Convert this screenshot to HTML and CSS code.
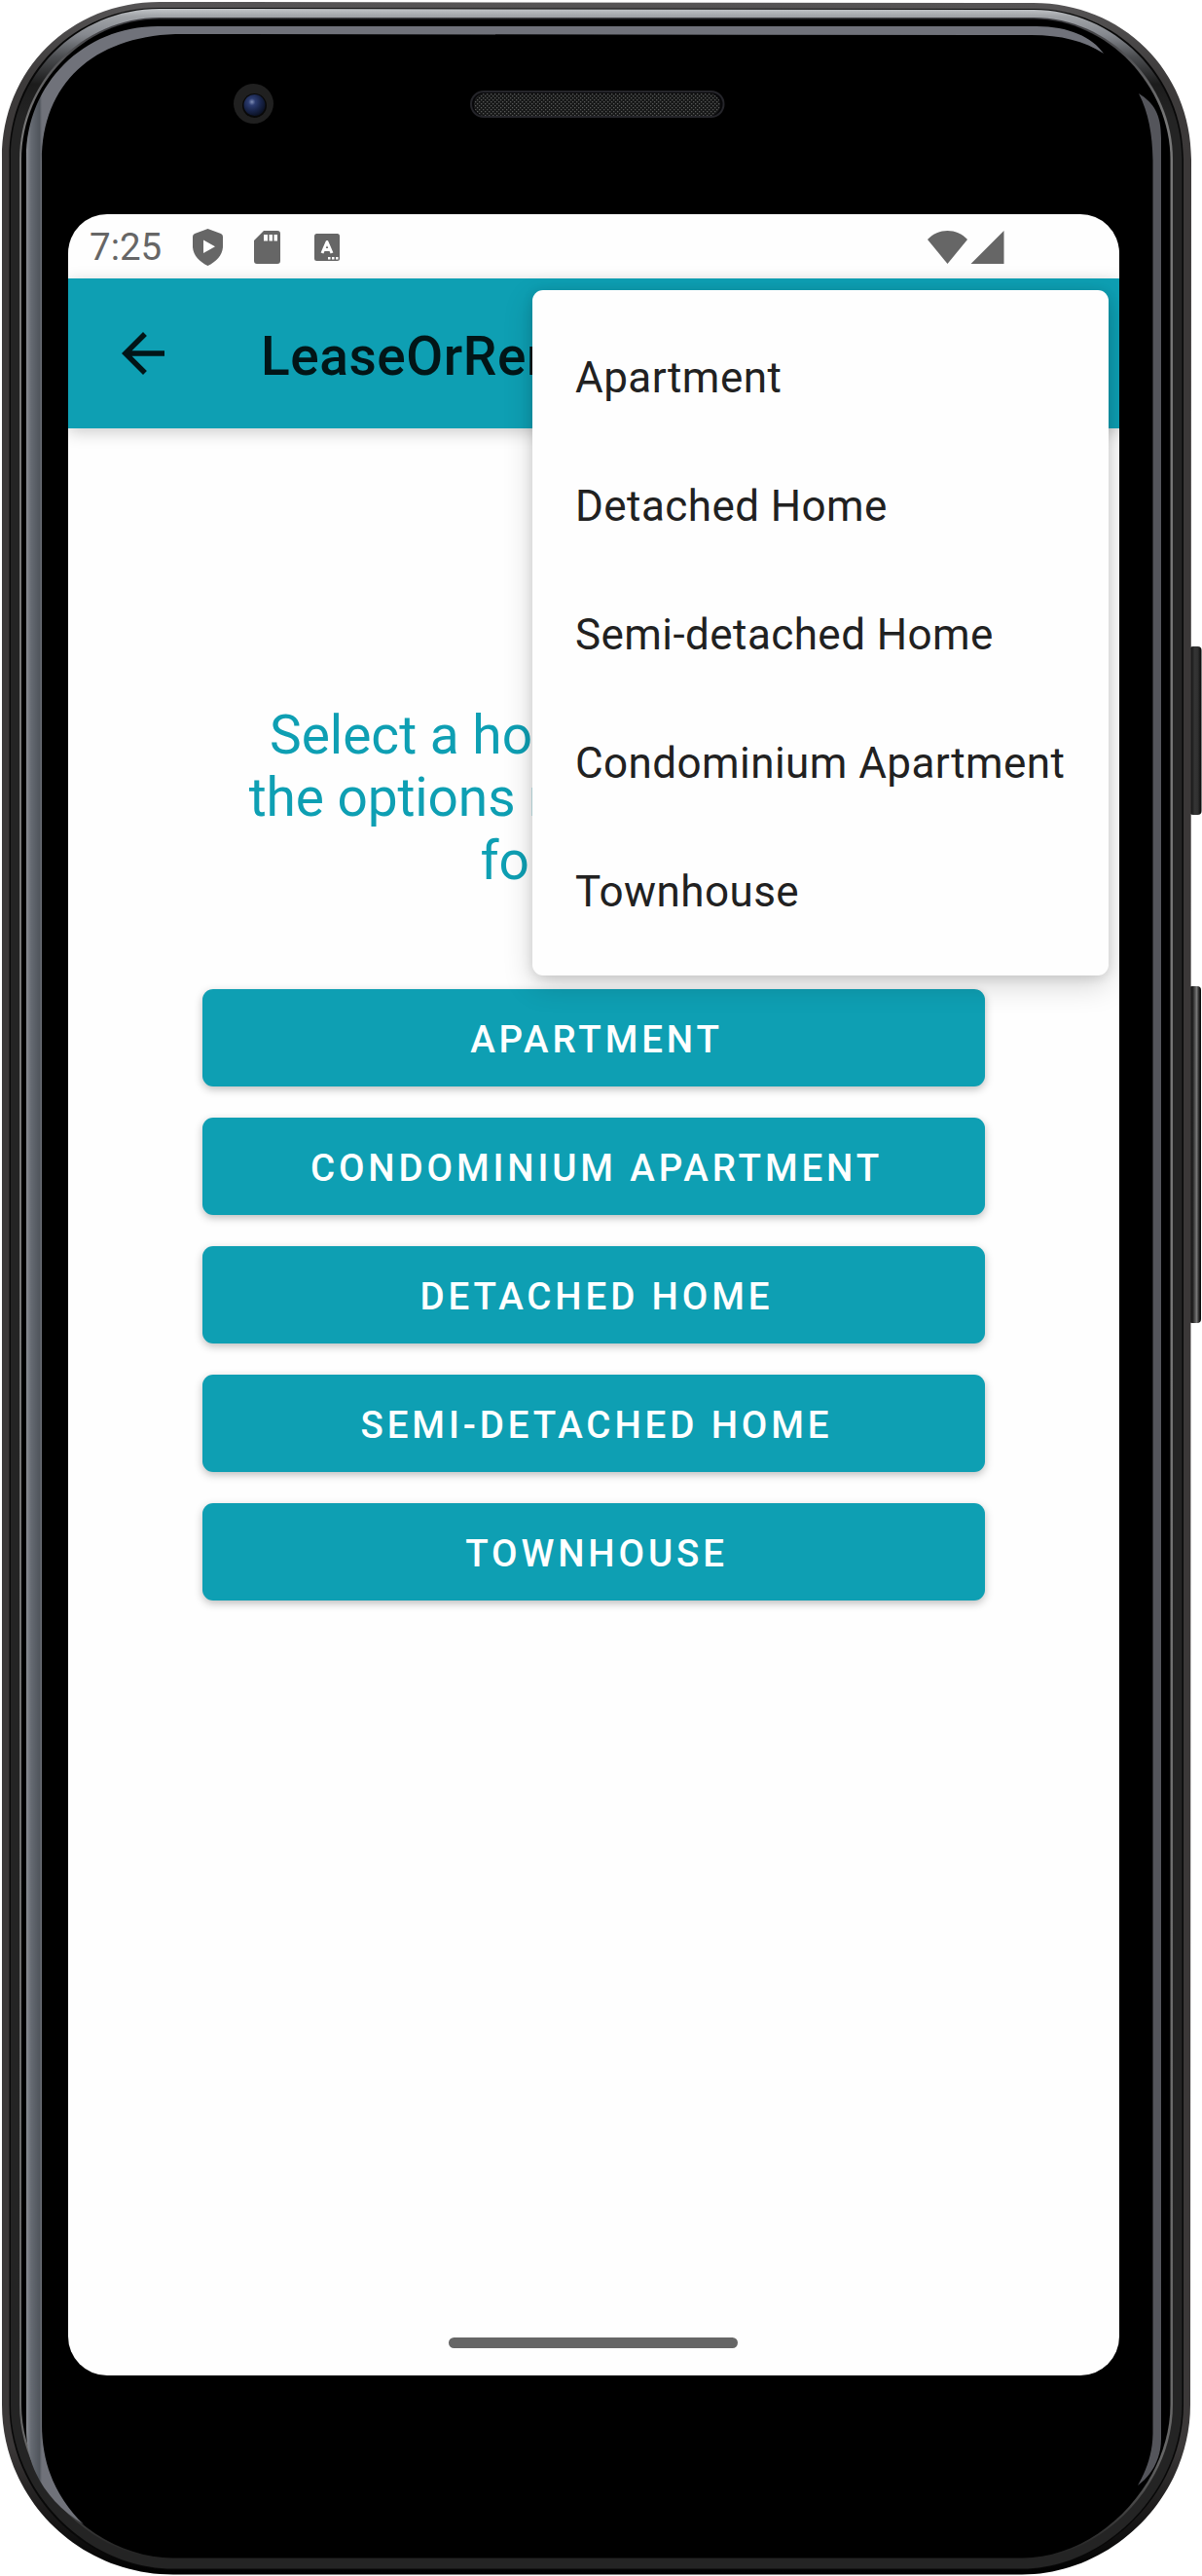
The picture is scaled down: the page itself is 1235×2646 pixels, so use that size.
FILE: index.html
```html
<!DOCTYPE html>
<html lang="en">
<head>
<meta charset="utf-8">
<title>LeaseOrRent</title>
<link rel="stylesheet" href="styles.css">
</head>
<body>
<div class="phone">
  <svg class="frame" viewBox="0 0 1235 2646" aria-hidden="true">
    <defs>
      <linearGradient id="rim" gradientUnits="userSpaceOnUse" x1="0" y1="2" x2="0" y2="2645">
        <stop offset="0" stop-color="#565455"/><stop offset=".03" stop-color="#3d3b3b"/><stop offset=".06" stop-color="#3b3838"/><stop offset=".95" stop-color="#3b3838"/><stop offset=".98" stop-color="#161515"/><stop offset="1" stop-color="#000"/>
      </linearGradient>
      <linearGradient id="metal" gradientUnits="userSpaceOnUse" x1="0" y1="8" x2="0" y2="120">
        <stop offset="0" stop-color="#c6c9cc"/><stop offset=".08" stop-color="#a0a3a7"/><stop offset=".25" stop-color="#85888e"/><stop offset=".45" stop-color="#4b4d50"/><stop offset=".7" stop-color="#1c1c1c"/><stop offset="1" stop-color="#242424"/>
      </linearGradient>
      <linearGradient id="hair" gradientUnits="userSpaceOnUse" x1="0" y1="18" x2="0" y2="2628">
        <stop offset="0" stop-color="#3c3c40"/><stop offset=".04" stop-color="#777"/><stop offset=".5" stop-color="#777"/><stop offset=".96" stop-color="#666"/><stop offset="1" stop-color="#222"/>
      </linearGradient>
      <linearGradient id="glass" gradientUnits="userSpaceOnUse" x1="27" y1="0" x2="43" y2="0">
        <stop offset="0" stop-color="#8a8d93"/><stop offset=".3" stop-color="#666b73"/><stop offset=".85" stop-color="#50555c"/><stop offset="1" stop-color="#70727a"/>
      </linearGradient>
      <linearGradient id="keys" x1="0" y1="0" x2="1" y2="0">
        <stop offset="0" stop-color="#080808"/><stop offset=".45" stop-color="#353535"/><stop offset=".7" stop-color="#303030"/><stop offset="1" stop-color="#050505"/>
      </linearGradient>
      <linearGradient id="volume" x1="0" y1="0" x2="1" y2="0">
        <stop offset="0" stop-color="#080808"/><stop offset=".35" stop-color="#222"/><stop offset=".65" stop-color="#777"/><stop offset=".85" stop-color="#222"/><stop offset="1" stop-color="#050505"/>
      </linearGradient>
      <radialGradient id="lens" cx=".38" cy=".35" r=".65">
        <stop offset="0" stop-color="#7f8db5"/><stop offset=".25" stop-color="#2c3c70"/><stop offset=".65" stop-color="#182449"/><stop offset="1" stop-color="#0c1327"/>
      </radialGradient>
      <pattern id="mesh" width="4" height="4" patternUnits="userSpaceOnUse">
        <rect width="4" height="4" fill="#161717"/><rect width="1.3" height="1.3" fill="#585958"/><rect x="2" y="2" width="1.3" height="1.3" fill="#585958"/>
      </pattern>
    </defs>
    <rect x="1222" y="664" width="12.500" height="173" rx="4" fill="url(#keys)"/>
    <rect x="1221" y="1013" width="13" height="346" rx="4" fill="url(#volume)"/>
    <path fill="url(#rim)" d="M2 162C2 72 72 2 164 2L1062 3C1152 3 1224 72 1224 164L1223 2470C1223 2566 1142 2644.500 1050 2644.500L178 2644.500C80 2644.500 2 2566 2 2470Z"/>
    <path fill="#080808" d="M9.500 162C9.500 76 76 8 164 8L1062 9C1146 9 1216 78 1216 164V2470C1216 2560 1136 2639.500 1050 2639.500H178C86 2639.500 9.500 2560 9.500 2470Z"/>
    <path fill="url(#metal)" d="M11 162C11 78 78 9 164 9L1062 10C1144 10 1214.500 80 1214.500 164V2470C1214.500 2558 1136 2638.500 1050 2638.500H178C88 2638.500 11 2558 11 2470Z"/>
    <path fill="url(#hair)" d="M20 164C20 85 84 18 164 18H1062C1140 18 1205 86 1205 164V2470C1205 2552 1132 2628.500 1050 2628.500H178C94 2628.500 20 2552 20 2470Z"/>
    <path fill="#000" d="M22 164C22 87 86 19.500 164 19.500H1062C1138 19.500 1202.500 88 1202.500 164V2470C1202.500 2550 1130 2627.500 1050 2627.500H178C96 2627.500 22 2550 22 2470Z"/>
    <path fill="url(#glass)" d="M86 2593C48 2570 27 2535 27 2495V162C27 86 86 27 162 27H1065C1098 27 1122 38 1134 55C1114 42 1090 36 1060 36L180 35C96 38 43 86 43 165V2490C43 2535 60 2568 86 2593Z"/>
    <path fill="#54555b" d="M1170 96C1186 106 1193 118 1193 142V2505C1193 2525 1184 2542 1169 2553C1178 2537 1184 2521 1184.500 2500V165C1184 137 1180 116 1170 96Z"/>
    <circle cx="260.500" cy="106.500" r="20.500" fill="#202020"/>
    <circle cx="261.500" cy="108.500" r="12.500" fill="#080808"/>
    <circle cx="261.500" cy="108" r="11" fill="url(#lens)"/>
    <rect x="484" y="94" width="259.500" height="26" rx="13" fill="#08080a" stroke="#25252a" stroke-width="2"/>
    <rect x="487" y="96" width="253" height="23" rx="11.500" fill="url(#mesh)"/>
  </svg>

  <main class="screen">
    <header class="status">
      <span class="clock">7:25</span>
      <svg class="shield" viewBox="0 0 31 38"><path fill="#666" fill-rule="evenodd" d="M15.500 0L29 5Q31 6 31 8V18C31 27 24 34 15.500 38C7 34 0 27 0 18V8Q0 6 2 5ZM11 11.500V25L23 18.300Z"/></svg>
      <svg class="card" viewBox="0 0 27 34"><path fill="#666" fill-rule="evenodd" d="M10 0H24Q27 0 27 3V31Q27 34 24 34H3Q0 34 0 31V10ZM10 4V10.500H14V4ZM15.500 4V10.500H19V4ZM20.500 4V10.500H24V4Z"/></svg>
      <svg class="letter" viewBox="0 0 26 28"><rect width="26" height="28" rx="2.500" fill="#666"/><path d="M8 20L13 8.500L18 20M10 16.500H16" fill="none" stroke="#fff" stroke-width="3" stroke-linejoin="round"/><path d="M14 24h2.500v2.500H14zM18 24h2.500v2.500H18zM22 24h2.500v2.500H22z" fill="#fff"/></svg>
      <svg class="wifi" viewBox="0 0 41 34"><path fill="#666" d="M0 9C11-3 30-3 41 9L20.500 34Z"/></svg>
      <svg class="signal" viewBox="0 0 34 34"><path fill="#666" d="M34 0V34H0Z"/></svg>
    </header>
    <div class="appbar">
      <svg class="back" viewBox="0 0 24 24"><path fill="#021517" d="M20 11H7.830l5.590-5.590L12 4l-8 8 8 8 1.410-1.410L7.830 13H20v-2z"/></svg>
      <h1 class="title">LeaseOrRent</h1>
    </div>
    <section class="content">
      <p class="prompt">
        <span class="line first">Select a ho</span>
        <span class="line second">the options n</span>
        <span class="line third">fo</span>
      </p>
      <div class="choices">
        <button class="choice">APARTMENT</button>
        <button class="choice">CONDOMINIUM APARTMENT</button>
        <button class="choice">DETACHED HOME</button>
        <button class="choice">SEMI-DETACHED HOME</button>
        <button class="choice">TOWNHOUSE</button>
      </div>
    </section>
    <div class="navhandle"></div>
    <ul class="menu">
      <li class="item">Apartment</li>
      <li class="item">Detached Home</li>
      <li class="item">Semi-detached Home</li>
      <li class="item">Condominium Apartment</li>
      <li class="item">Townhouse</li>
    </ul>
  </main>
</div>
</body>
</html>
```
FILE: styles.css
```css
* { box-sizing: border-box; }

body {
  margin: 0;
  background: #fff;
  font-family: Roboto, "Liberation Sans", sans-serif;
}

.phone {
  position: relative;
  width: 1235px;
  height: 2646px;
  padding: 220px 85px 206px 70px;
  overflow: hidden;
}

/* Handset body, drawn behind the screen */
.frame {
  position: absolute;
  inset: 0;
  width: 1235px;
  height: 2646px;
}

.screen {
  position: relative;
  display: flex;
  flex-direction: column;
  width: 1080px;
  height: 2220px;
  border-radius: 40px;
  background: #fefefe;
  overflow: hidden;
}

.status {
  display: flex;
  align-items: center;
  flex: 0 0 66px;
  padding: 2px 118px 0 22px;
}

.clock {
  width: 106px;
  color: #666;
  font-size: 38.5px;
  line-height: 64px;
}

.shield { width: 31px; height: 38px; margin-right: 32px; }
.card { width: 27px; height: 34px; margin-right: 35px; }
.letter { width: 26px; height: 28px; }
.wifi { width: 41px; height: 34px; margin: 0 3px 0 auto; }
.signal { width: 35px; height: 34px; }

.appbar {
  display: flex;
  align-items: center;
  flex: 0 0 154px;
  padding-left: 44px;
  background: #0e9fb3;
  box-shadow: 0 4px 16px rgba(0, 0, 0, .2);
}

.back { width: 66px; height: 66px; }

.title {
  margin: 6px 0 0 88px;
  color: #021517;
  font-size: 55px;
  font-weight: 500;
  letter-spacing: .55px;
  line-height: 64px;
}

.content {
  display: flex;
  flex-direction: column;
  flex: 1;
  padding: 283px 138px 0;
}

.prompt {
  height: 193px;
  margin: 0 0 100px;
  color: #0e9fb3;
  font-size: 55px;
  line-height: 64.4px;
  white-space: nowrap;
}

.line { display: block; }
.first { padding-left: 69px; }
.second { padding-left: 47.7px; letter-spacing: -.1px; }
.third { padding-left: 285.4px; }

.choices {
  display: flex;
  flex-direction: column;
  gap: 32px;
}

.choice {
  height: 100px;
  padding: 5px 0 0 6px;
  border: 0;
  border-radius: 11px;
  background: #0e9fb3;
  box-shadow: 0 3px 8px rgba(0, 0, 0, .26);
  color: #fff;
  font: 500 38.5px/1 Roboto, "Liberation Sans", sans-serif;
  letter-spacing: 3.88px;
}

.navhandle {
  flex: 0 0 11px;
  width: 297px;
  margin: 0 0 28px 391px;
  border-radius: 6px;
  background: #666;
}

/* Overflow menu, floating above the page */
.menu {
  position: absolute;
  top: 78px;
  right: 11px;
  width: 592px;
  height: 704px;
  margin: 0;
  padding: 24px 0 20px 44px;
  border-radius: 11px;
  background: #fefefe;
  box-shadow: 0 10px 30px rgba(0, 0, 0, .17), 0 2px 12px rgba(0, 0, 0, .12);
  list-style: none;
}

.item {
  height: 132px;
  color: #212121;
  font-size: 44px;
  letter-spacing: .43px;
  line-height: 132px;
  white-space: nowrap;
}
```
